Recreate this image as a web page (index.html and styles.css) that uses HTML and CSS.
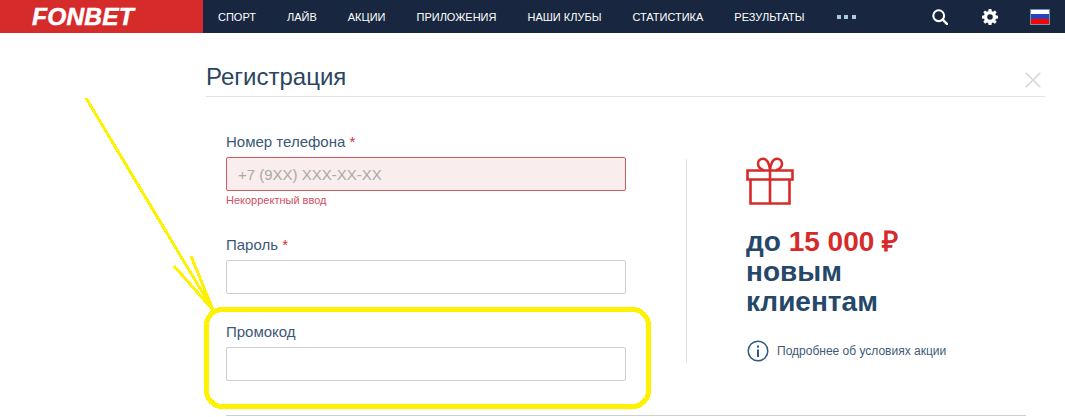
FILE: index.html
```html
<!DOCTYPE html>
<html lang="ru">
<head>
<meta charset="utf-8">
<title>Fonbet</title>
<link rel="stylesheet" href="styles.css">
</head>
<body>
<header class="topbar">
  <div class="brand"><span class="logo">FONBET</span></div>
  <nav class="nav">
    <a class="nav-item">Спорт</a>
    <a class="nav-item">Лайв</a>
    <a class="nav-item">Акции</a>
    <a class="nav-item">Приложения</a>
    <a class="nav-item">Наши клубы</a>
    <a class="nav-item">Статистика</a>
    <a class="nav-item">Результаты</a>
    <span class="dots"><i></i><i></i><i></i></span>
  </nav>
  <div class="tools">
    <svg class="tool" viewBox="0 0 16 16" width="16" height="16"><circle cx="6.7" cy="6.7" r="5.4" fill="none" stroke="#fff" stroke-width="2.1"/><path d="M10.7 10.7L15.2 15.2" stroke="#fff" stroke-width="2.4" stroke-linecap="round"/></svg>
    <svg class="tool" viewBox="0 0 16 16" width="16" height="16"><path fill="#fff" fill-rule="evenodd" d="M6.6 0h2.8l.4 2.2 1.2.5L12.9 1.4 14.7 3.3 13.4 5.1l.5 1.2L16 6.7v2.7l-2.1.4-.5 1.2 1.3 1.8-1.8 1.9-1.9-1.3-1.2.5L9.4 16H6.6l-.4-2.1-1.2-.5-1.9 1.3-1.8-1.9 1.3-1.8-.5-1.2L0 9.4V6.7l2.1-.4.5-1.2L1.3 3.3 3.1 1.4 5 2.7l1.2-.5zM8 5.2a2.8 2.8 0 1 0 0 5.6 2.8 2.8 0 0 0 0-5.6z"/></svg>
    <span class="flag"><i class="flag-w"></i><i class="flag-b"></i><i class="flag-r"></i></span>
  </div>
</header>

<main class="page">
  <div class="title-row">
    <h1 class="title">Регистрация</h1>
    <svg class="close" viewBox="0 0 16 16" width="16" height="16"><path d="M.7.7l14.6 14.6M15.3.7L.7 15.3" stroke="#d3d6da" stroke-width="1.6" fill="none"/></svg>
  </div>
  <div class="content">
    <form class="form">
      <div class="field field-phone">
        <label class="label">Номер телефона <span class="req">*</span></label>
        <div class="input input-error">+7 (9XX) XXX-XX-XX</div>
        <div class="error">Некорректный ввод</div>
      </div>
      <div class="field field-pass">
        <label class="label">Пароль <span class="req">*</span></label>
        <div class="input"></div>
      </div>
      <div class="field field-promo">
        <label class="label">Промокод</label>
        <div class="input"></div>
      </div>
    </form>
    <aside class="promo">
      <svg class="gift" viewBox="0 0 48 48" width="48" height="48" fill="none" stroke="#d62b2b" stroke-width="2.6"><path d="M1.500 13.500h45v9h-45zM4.500 22.500v24h39v-24M24 13.500v33"/><path d="M24 13c-.3-2.500-.6-4.500-1.500-6.500-1-2.400-3-4.700-5.500-4.700-2.800 0-5 2.200-5 4.900 0 3 2.500 6.300 6 6.300M24 13c.3-2.500.6-4.500 1.500-6.500 1-2.400 3-4.700 5.500-4.700 2.800 0 5 2.200 5 4.900 0 3-2.500 6.300-6 6.300"/></svg>
      <div class="bonus">до <span class="bonus-sum">15 000 ₽</span><br>новым<br>клиентам</div>
      <div class="more">
        <svg class="info" viewBox="0 0 22 22" width="22" height="22"><circle cx="11" cy="11" r="9.800" fill="none" stroke="#2f5a7e" stroke-width="1.500"/><rect x="10" y="9.500" width="2" height="7.500" fill="#2f5a7e"/><rect x="10" y="5.500" width="2" height="2.200" fill="#2f5a7e"/></svg>
        <span>Подробнее об условиях акции</span>
      </div>
    </aside>
  </div>
  <div class="bottom-rule"></div>
</main>

<svg class="annotation" viewBox="0 0 1065 417" width="1065" height="417" fill="none" stroke="#fff200">
  <path d="M86 98L213 310M174 266L213 310M191 256L213 310" stroke-width="3"/>
  <rect x="206.500" y="309.500" width="442" height="97" rx="16" stroke-width="5"/>
</svg>
</body>
</html>
```
FILE: styles.css
```css
* { box-sizing: border-box; }
html, body { margin: 0; padding: 0; }
body {
  width: 1065px;
  height: 417px;
  overflow: hidden;
  position: relative;
  background: #fff;
  font-family: "Liberation Sans", Arial, sans-serif;
  color: #2b4560;
}
.topbar { display: flex; height: 33px; background: #18273f; }
.brand {
  width: 203px;
  background: #d62b2b;
  padding-left: 32px;
  display: flex;
  align-items: center;
}
.logo {
  color: #fff;
  font-size: 24.500px;
  font-weight: 700;
  font-style: italic;
  line-height: 30px;
  letter-spacing: .2px;
  -webkit-text-stroke: .5px #fff;
}
.nav { display: flex; align-items: center; padding-left: 15px; width: 669px; }
.nav-item { color: #fff; font-size: 11px; text-transform: uppercase; margin-right: 31px; white-space: nowrap; }
.dots { display: flex; gap: 3.500px; margin-left: 1px; }
.dots i { width: 4px; height: 4px; background: #a6cbe0; }
.tools { display: flex; align-items: center; padding-left: 60px; }
.tool { margin-right: 34px; }
.flag {
  display: flex;
  flex-direction: column;
  width: 20px;
  height: 16px;
  border: 1px solid #6f97ab;
  margin-left: -2px;
}
.flag i { flex: 1; display: block; }
.flag-w { background: #fff; }
.flag-b { background: #2746b5; }
.flag-r { background: #f00; }

.page { padding: 0 20px 0 206px; }
.title-row {
  display: flex;
  justify-content: space-between;
  align-items: flex-end;
  height: 64px;
  border-bottom: 1px solid #dfe4ea;
  padding: 0 4px 8px 0;
}
.title { margin: 0; font-size: 24px; font-weight: 400; line-height: 30px; color: #2b4560; position: relative; top: 4px; }
.content { display: flex; }
.form { width: 420px; padding: 35px 0 0 20px; }
.field-pass { margin-top: 28px; }
.field-promo { margin-top: 28px; }
.label { display: block; font-size: 15px; line-height: 20px; margin-bottom: 5px; color: #3b5878; }
.req { color: #d62b2b; }
.input {
  width: 400px;
  height: 34px;
  border: 1px solid #cfcfcf;
  border-radius: 2px;
  background: #fff;
  font-size: 15px;
  line-height: 34px;
  padding-left: 11px;
}
.input-error { background: #f9eded; border-color: #cf5c5c; color: #aaa; }
.error { font-size: 11px; line-height: 13px; margin-top: 3px; color: #cf4f5f; }
.promo {
  margin: 62px 0 0 60px;
  height: 204px;
  border-left: 1px solid #e2e2e2;
  padding-left: 59px;
  width: 360px;
}
.gift { display: block; margin-top: -2px; }
.bonus {
  margin-top: 22px;
  font-size: 28px;
  font-weight: 700;
  line-height: 30px;
  color: #25486a;
}
.bonus-sum { color: #d62b2b; }
.more { display: flex; align-items: center; gap: 8px; margin-top: 23px; margin-left: 1px; font-size: 12px; color: #3f5a78; }
.bottom-rule { height: 1px; background: #cfcfcf; margin: 34px 19px 0 20px; }
.annotation { position: absolute; left: 0; top: 0; pointer-events: none; shape-rendering: crispEdges; }
```
